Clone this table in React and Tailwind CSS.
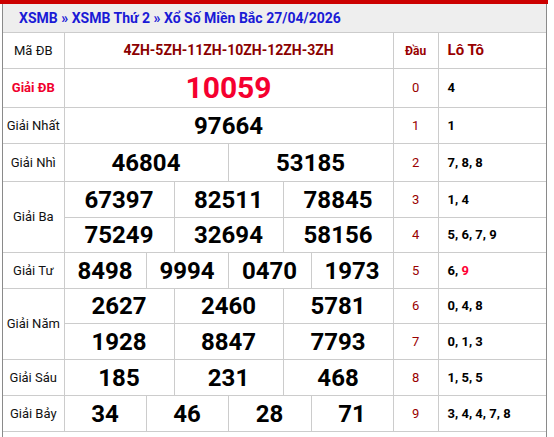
const rows = [
  { label: "Giải ĐB", special: true, nums: ["10059"], dau: "0", loto: ["4"], h: "h-[39px]" },
  { label: "Giải Nhất", nums: ["97664"], dau: "1", loto: ["1"] },
  { label: "Giải Nhì", nums: ["46804", "53185"], dau: "2", loto: ["7", "8", "8"], h: "h-[38px]" },
  { label: "Giải Ba", span: 2, nums: ["67397", "82511", "78845"], dau: "3", loto: ["1", "4"] },
  { nums: ["75249", "32694", "58156"], dau: "4", loto: ["5", "6", "7", "9"], h: "h-[35px]" },
  { label: "Giải Tư", nums: ["8498", "9994", "0470", "1973"], dau: "5", loto: ["6", "9"], red: ["9"] },
  { label: "Giải Năm", span: 2, nums: ["2627", "2460", "5781"], dau: "6", loto: ["0", "4", "8"], h: "h-[35px]" },
  { nums: ["1928", "8847", "7793"], dau: "7", loto: ["0", "1", "3"] },
  { label: "Giải Sáu", nums: ["185", "231", "468"], dau: "8", loto: ["1", "5", "5"] },
  { label: "Giải Bảy", nums: ["34", "46", "28", "71"], dau: "9", loto: ["3", "4", "4", "7", "8"] },
];

// 12 sub-columns share the number area (329px) so 2, 3 and 4 splits line up
const subCols = [
  "w-[27px]", "w-[28px]", "w-[27px]", "w-[28px]", "w-[27px]", "w-[27px]",
  "w-[28px]", "w-[27px]", "w-[28px]", "w-[27px]", "w-[27px]", "w-[28px]",
];

const cell = "border border-[#cccccc] p-0";

function LotoList({ items, red }) {
  return items.map((n, i) => (
    <span key={i}>
      {i > 0 && ", "}
      <span className={red && red.includes(n) && i === items.length - 1 ? "text-[#ff0033]" : ""}>{n}</span>
    </span>
  ));
}

export default function App() {
  return (
    <div className="w-[548px] border-t-4 border-[#cc0000] bg-white font-['Roboto',sans-serif]">
      <div className="ml-[2px] w-[545px] border-x border-[#8a8a8a] pb-[5px]">
        <div className="flex h-[28px] items-center bg-[#eeeeee] pl-[16px] text-[14px] font-bold text-[#1a1ad6]">
          XSMB » XSMB Thứ 2 » Xổ Số Miền Bắc 27/04/2026
        </div>
        <table className="w-[543px] table-fixed border-collapse">
          <colgroup>
            <col className="w-[61px]" />
            {subCols.map((w, i) => (
              <col key={i} className={w} />
            ))}
            <col className="w-[45px]" />
            <col className="w-[108px]" />
          </colgroup>
          <tbody>
            <tr className="h-[36px]">
              <td className={`${cell} border-l-0 text-center text-[13px] text-[#111]`}>Mã ĐB</td>
              <td colSpan={12} className={`${cell} text-center text-[14px] font-bold text-[#8b0000]`}>
                4ZH-5ZH-11ZH-10ZH-12ZH-3ZH
              </td>
              <td className={`${cell} text-center text-[12px] font-bold text-[#990000]`}>Đầu</td>
              <td className={`${cell} border-r-0 pl-[9px] text-[15px] font-bold text-[#990000]`}>Lô Tô</td>
            </tr>
            {rows.map((r, idx) => (
              <tr key={idx} className={r.h || "h-[36px]"}>
                {r.label && (
                  <td
                    rowSpan={r.span || 1}
                    className={`${cell} border-l-0 text-center text-[13px] ${
                      r.special ? "font-bold text-[#f0002d]" : "text-[#111]"
                    }`}
                  >
                    {r.label}
                  </td>
                )}
                {r.nums.map((n, i) => (
                  <td
                    key={i}
                    colSpan={12 / r.nums.length}
                    className={`${cell} text-center font-bold leading-none ${
                      r.special ? "text-[30px] text-[#f5002f]" : "text-[24px] text-black"
                    }`}
                  >
                    {n}
                  </td>
                ))}
                <td className={`${cell} text-center text-[13px] text-[#990000]`}>{r.dau}</td>
                <td className={`${cell} border-r-0 pl-[9px] text-[13px] font-bold text-black`}>
                  <LotoList items={r.loto} red={r.red} />
                </td>
              </tr>
            ))}
          </tbody>
        </table>
      </div>
    </div>
  );
}
